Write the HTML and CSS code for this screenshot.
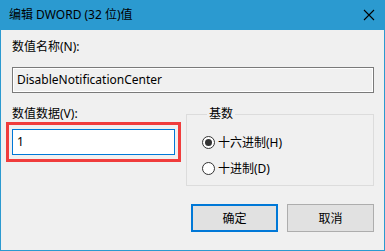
FILE: index.html
```html
<!DOCTYPE html>
<html lang="zh-CN">
<head>
    <meta charset="UTF-8">
    <title>编辑 DWORD (32 位)值</title>
    <link rel="stylesheet" href="styles.css">
</head>
<body>

    <div class="window">
        <div class="titlebar">
            <span class="title">编辑 DWORD (32 位)值</span>
            <svg class="close" width="12" height="12" viewBox="0 0 12 12">
                <path d="M1 1 L11 11 M11 1 L1 11" stroke="#000" stroke-width="1.1" fill="none"/>
            </svg>
        </div>

        <div class="content">
            <div class="label">数值名称(N):</div>
            <div class="namebox">DisableNotificationCenter</div>

            <div class="row">
                <div class="left">
                    <div class="label">数值数据(V):</div>
                    <div class="highlight">
                        <div class="databox">1</div>
                    </div>
                </div>

                <fieldset class="group">
                    <legend>基数</legend>
                    <div class="radio"><span class="dot checked"></span>十六进制(H)</div>
                    <div class="radio"><span class="dot"></span>十进制(D)</div>
                </fieldset>
            </div>

            <div class="buttons">
                <div class="btn default">确定</div>
                <div class="btn">取消</div>
            </div>
        </div>
    </div>

</body>
</html>
```

FILE: styles.css
```css
body {
    margin: 0;
    font-family: "Noto Sans", "Noto Sans CJK SC", sans-serif;
    font-size: 12px;
    color: #000;
}
.window {
    width: 385px;
    height: 251px;
    box-sizing: border-box;
    background: #f0f0f0;
    border: 1px solid #2b9ad0;
    border-top: none;
}
.titlebar {
    height: 30px;
    margin: 0 -1px;
    background: #2b9ad0;
    display: flex;
    align-items: center;
    justify-content: space-between;
    padding: 0 10px 0 9px;
}
.title {
    line-height: 16px;
}
.close {
    display: block;
}
.content {
    padding: 9px 10px 0 11px;
}
.label {
    line-height: 16px;
}
.namebox {
    margin-top: 12px;
    height: 26px;
    box-sizing: border-box;
    border: 1px solid #7a7a7a;
    box-shadow: inset 0 0 0 1px #fff;
    padding-left: 4px;
    line-height: 24px;
}
.row {
    display: flex;
    margin-top: 13px;
    margin-left: -6px;
    gap: 5px;
}
.left {
    width: 175px;
}
.left .label {
    padding-left: 6px;
}
.highlight {
    border: 3px solid #f03c3c;
    padding: 4px 3px;
}
.databox {
    height: 26px;
    box-sizing: border-box;
    border: 1px solid #0078d7;
    background: #fff;
    padding-left: 4px;
    line-height: 24px;
}
.group {
    flex: 1;
    margin: 0;
    padding: 10px 0 7px 15px;
    border: 1px solid #dcdcdc;
}
.group legend {
    padding: 0 2px;
    margin-left: 5px;
    line-height: 16px;
}
.radio {
    display: flex;
    align-items: center;
    height: 20px;
}
.radio + .radio {
    margin-top: 6px;
}
.dot {
    width: 13px;
    height: 13px;
    box-sizing: border-box;
    border: 1px solid #333;
    border-radius: 50%;
    background: #fff;
    margin-right: 3px;
    display: flex;
    align-items: center;
    justify-content: center;
}
.dot.checked::after {
    content: "";
    width: 7px;
    height: 7px;
    border-radius: 50%;
    background: #333;
}
.buttons {
    display: flex;
    justify-content: flex-end;
    gap: 9px;
    margin-top: 18px;
}
.btn {
    width: 87px;
    height: 28px;
    box-sizing: border-box;
    background: #e1e1e1;
    border: 1px solid #adadad;
    display: flex;
    align-items: center;
    justify-content: center;
}
.btn.default {
    border: 2px solid #0078d7;
}
```
